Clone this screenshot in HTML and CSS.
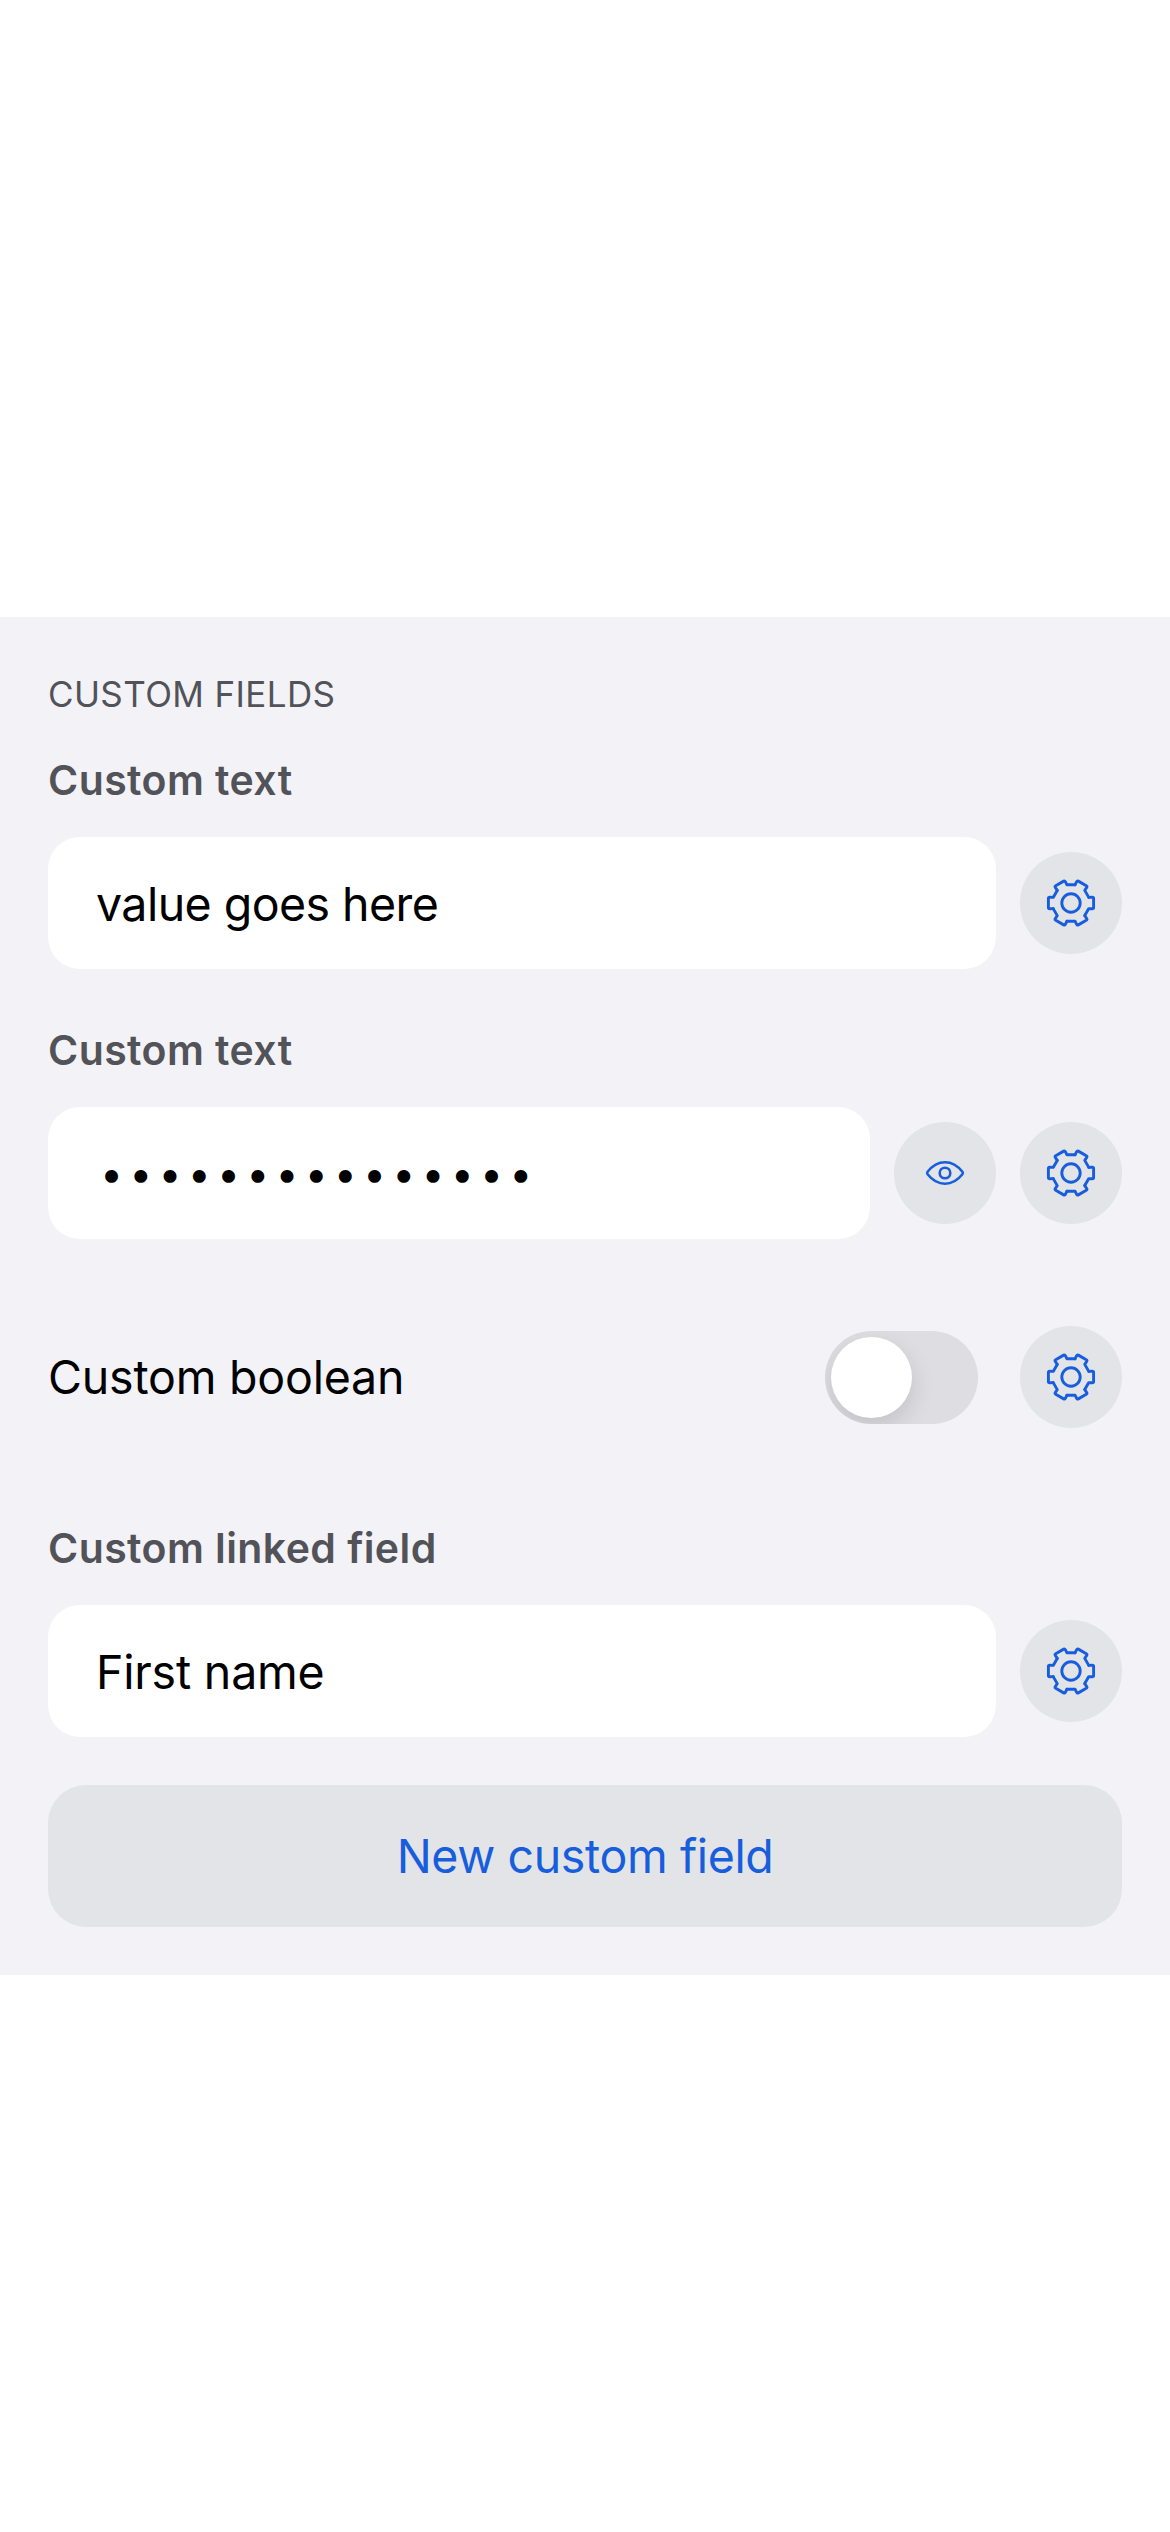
FILE: index.html
```
<!DOCTYPE html>
<html lang="en">
<head>
<meta charset="utf-8">
<title>Custom fields</title>
<link rel="stylesheet" href="styles.css">
</head>
<body>
<svg class="sprite" aria-hidden="true">
  <defs>
    <path id="tooth" d="M17.8 -5.6L21.3 -5.8Q22.6 -5.8 22.6 -4.6V4.6Q22.6 5.8 21.3 5.8L17.8 5.6L13.75 12.6"/>
    <symbol id="gear" viewBox="-25 -25 50 50">
      <use href="#tooth"/>
      <use href="#tooth" transform="rotate(60)"/>
      <use href="#tooth" transform="rotate(120)"/>
      <use href="#tooth" transform="rotate(180)"/>
      <use href="#tooth" transform="rotate(240)"/>
      <use href="#tooth" transform="rotate(300)"/>
      <circle r="9.2"/>
    </symbol>
    <symbol id="eye" viewBox="-25 -25 50 50">
      <path d="M-17.4 -1.3C-12.5 -7.5 -6.5 -10.8 0 -10.8S12.5 -7.5 17.4 -1.3Q18.3 0 17.4 1.3C12.5 7.5 6.5 10.8 0 10.8S-12.5 7.5 -17.4 1.3Q-18.3 0 -17.4 -1.3Z"/>
      <circle r="5.3"/>
    </symbol>
  </defs>
</svg>
<main class="panel">
  <h1 class="section-title">CUSTOM FIELDS</h1>

  <section class="field">
    <h2 class="label">Custom text</h2>
    <div class="row">
      <div class="input">value goes here</div>
      <button class="round" aria-label="Settings"><svg class="icon"><use href="#gear"/></svg></button>
    </div>
  </section>

  <section class="field">
    <h2 class="label">Custom text</h2>
    <div class="row">
      <div class="input masked">•••••••••••••••</div>
      <button class="round" aria-label="Show"><svg class="icon eye"><use href="#eye"/></svg></button>
      <button class="round" aria-label="Settings"><svg class="icon"><use href="#gear"/></svg></button>
    </div>
  </section>

  <section class="row boolean">
    <span class="boolean-label">Custom boolean</span>
    <span class="toggle"><span class="knob"></span></span>
    <button class="round" aria-label="Settings"><svg class="icon"><use href="#gear"/></svg></button>
  </section>

  <section class="field linked">
    <h2 class="label">Custom linked field</h2>
    <div class="row">
      <div class="input name">First name</div>
      <button class="round" aria-label="Settings"><svg class="icon"><use href="#gear"/></svg></button>
    </div>
  </section>

  <button class="new-field">New custom field</button>
</main>
</body>
</html>
```
FILE: styles.css
```
* {
  box-sizing: border-box;
}

body {
  margin: 0;
  padding-top: 617px;
  min-height: 2532px;
  background: #fff;
  color: #000;
  font-family: Inter, "Liberation Sans", sans-serif;
  font-size: 46.5px;
}

button {
  border: 0;
  padding: 0;
  font: inherit;
  background: #e2e4e8;
  color: #175ddc;
}

.sprite {
  display: none;
}

.panel {
  height: 1358px;
  padding: 56px 48px 48px;
  background: #f2f2f7;
}

.section-title {
  margin: 0 0 40px;
  color: #525259;
  font-size: 35px;
  font-weight: 400;
  line-height: 42px;
  letter-spacing: 0.38px;
}

.field + .field {
  margin-top: 56px;
}

.label {
  margin: 0 0 32px;
  color: #525259;
  font-size: 41px;
  font-weight: 600;
  line-height: 50px;
  letter-spacing: 0.42px;
}

.row {
  display: flex;
  align-items: center;
  gap: 24px;
}

.input {
  flex: 1;
  height: 132px;
  padding: 2px 48px 0;
  border-radius: 32px;
  background: #fff;
  line-height: 130px;
  letter-spacing: -0.55px;
  white-space: nowrap;
}

.input.name {
  letter-spacing: -0.2px;
}

.input.masked {
  padding: 0 52px;
  font-size: 41px;
  line-height: 132px;
  letter-spacing: 6.17px;
}

.round {
  display: flex;
  align-items: center;
  justify-content: center;
  width: 102px;
  height: 102px;
  border-radius: 50%;
}

.icon {
  width: 50px;
  height: 50px;
  fill: none;
  stroke: #175ddc;
  stroke-width: 2.9;
  stroke-linecap: round;
  stroke-linejoin: round;
}

.icon.eye {
  stroke-width: 2.6;
}

.boolean {
  margin-top: 87px;
}

.boolean-label {
  flex: 1;
  line-height: 60px;
  letter-spacing: -0.2px;
}

.toggle {
  width: 153px;
  height: 93px;
  margin-right: 18px;
  padding: 6px;
  border-radius: 47px;
  background: #dedde2;
  overflow: hidden;
}

.knob {
  display: block;
  width: 81px;
  height: 81px;
  border-radius: 50%;
  background: #fff;
  box-shadow: 0 9px 24px rgba(0, 0, 0, 0.13);
}

.linked {
  margin-top: 95px;
}

.new-field {
  display: block;
  width: 100%;
  height: 142px;
  margin-top: 48px;
  border-radius: 38px;
  letter-spacing: -0.38px;
}
```
